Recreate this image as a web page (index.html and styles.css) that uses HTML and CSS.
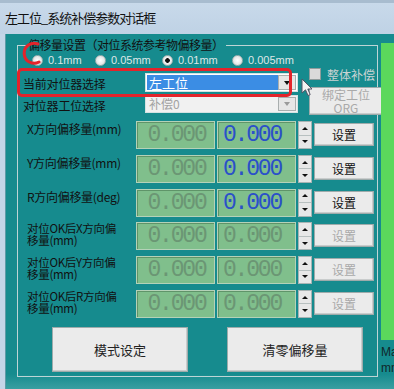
FILE: index.html
```html
<!DOCTYPE html>
<html lang="zh-CN">
<head>
    <meta charset="UTF-8">
    <meta name="viewport" content="width=device-width, initial-scale=1.0">
    <title>左工位_系统补偿参数对话框</title>
    <link rel="stylesheet" href="styles.css">
</head>
<body>
    <div class="window">
        <div class="titlebar">左工位_系统补偿参数对话框</div>

        <div class="client">
            <fieldset class="group">
                <legend>偏移量设置（对位系统参考物偏移量）</legend>

                <div class="radios">
                    <label class="radio"><span class="dot"></span>0.1mm</label>
                    <label class="radio"><span class="dot"></span>0.05mm</label>
                    <label class="radio checked"><span class="dot"></span>0.01mm</label>
                    <label class="radio"><span class="dot"></span>0.005mm</label>
                </div>

                <div class="selectors">
                    <div class="label">当前对位器选择</div>
                    <div class="combo active">
                        <span class="combo-text">左工位</span>
                        <span class="combo-btn"><i class="arrow"></i></span>
                    </div>
                    <div class="side-controls">
                        <label class="check"><span class="box"></span>整体补偿</label>
                        <div class="btn bind disabled">绑定工位<br>ORG</div>
                    </div>
                    <div class="label">对位器工位选择</div>
                    <div class="combo disabled">
                        <span class="combo-text">补偿0</span>
                        <span class="combo-btn"><i class="arrow"></i></span>
                    </div>
                </div>

                <div class="offsets">
                    <div class="label">X方向偏移量(mm)</div>
                    <div class="field first">0.000</div>
                    <div class="field second live">0.000</div>
                    <div class="spin"><span><i class="up"></i></span><span><i class="down"></i></span></div>
                    <div class="btn set">设置</div>

                    <div class="label">Y方向偏移量(mm)</div>
                    <div class="field first">0.000</div>
                    <div class="field second live">0.000</div>
                    <div class="spin"><span><i class="up"></i></span><span><i class="down"></i></span></div>
                    <div class="btn set">设置</div>

                    <div class="label">R方向偏移量(deg)</div>
                    <div class="field first">0.000</div>
                    <div class="field second live">0.000</div>
                    <div class="spin"><span><i class="up"></i></span><span><i class="down"></i></span></div>
                    <div class="btn set">设置</div>

                    <div class="label two">对位OK后X方向偏<br>移量(mm)</div>
                    <div class="field first">0.000</div>
                    <div class="field second">0.000</div>
                    <div class="spin"><span><i class="up"></i></span><span><i class="down"></i></span></div>
                    <div class="btn set disabled">设置</div>

                    <div class="label two">对位OK后Y方向偏<br>移量(mm)</div>
                    <div class="field first">0.000</div>
                    <div class="field second">0.000</div>
                    <div class="spin"><span><i class="up"></i></span><span><i class="down"></i></span></div>
                    <div class="btn set disabled">设置</div>

                    <div class="label two">对位OK后R方向偏<br>移量(mm)</div>
                    <div class="field first">0.000</div>
                    <div class="field second">0.000</div>
                    <div class="spin"><span><i class="up"></i></span><span><i class="down"></i></span></div>
                    <div class="btn set disabled">设置</div>
                </div>

                <div class="actions">
                    <div class="btn big">模式设定</div>
                    <div class="btn big">清零偏移量</div>
                </div>
            </fieldset>

            <div class="side">
                <div class="meter"></div>
                <div class="side-text">Max<br>mm</div>
            </div>
        </div>

        <!-- annotations drawn over the dialog -->
        <svg class="mark-arc" width="26" height="26" viewBox="0 0 26 26">
            <path d="M20 4 A10 10 0 1 0 21 22" fill="none" stroke="#e3242b" stroke-width="3" stroke-linecap="round"/>
        </svg>
        <div class="mark-box"></div>
        <svg class="cursor" width="14" height="20" viewBox="0 0 14 20">
            <path d="M1 1 L1 15 L4.5 11.8 L7 17.5 L9.2 16.6 L6.8 11 L11 11 Z" fill="#f4f4f4" stroke="#556" stroke-width="1"/>
        </svg>
    </div>
</body>
</html>
```

FILE: styles.css
```css
* {
    margin: 0;
    padding: 0;
    box-sizing: border-box;
}

body {
    width: 394px;
    height: 389px;
    overflow: hidden;
    background: #c3d5e7;
    font-family: "Noto Sans CJK SC", sans-serif;
    color: #111;
}

.window {
    position: relative;
    height: 389px;
}

.titlebar {
    height: 34px;
    padding: 9px 0 0 5px;
    font-size: 13px;
    line-height: 18px;
    letter-spacing: -1px;
    background: linear-gradient(#a8bccf 0, #a8bccf 3px, #c8d9ea 3px, #bfd2e5 100%);
}

.client {
    display: flex;
    height: 355px;
    margin-left: 5px;
    padding: 3px 0 0 12px;
    background: linear-gradient(#168b8e 0, #168b8e 340px, #3a9fa1 355px);
    box-shadow: inset 1px 0 0 #5d9aa6;
}

.group {
    width: 361px;
    height: 340px;
    min-width: 0;
    border: 1px solid #bdd5d6;
    flex-shrink: 0;
}

legend {
    margin-left: 8px;
    padding: 0 2px;
    font-size: 12px;
    line-height: 16px;
    letter-spacing: -0.5px;
}

/* radio row */
.radios {
    display: grid;
    grid-template-columns: 63px 67px 70px auto;
    height: 14px;
    padding-left: 14px;
}

.radio {
    display: flex;
    align-items: center;
    gap: 5px;
    font-family: "Liberation Sans", sans-serif;
    font-size: 11px;
    color: #dfe7e7;
}

.dot {
    width: 11px;
    height: 11px;
    border-radius: 50%;
    border: 1px solid #9fb0b0;
    background: radial-gradient(#ffffff, #d4d8d8);
}

.checked .dot {
    background: radial-gradient(#111 0, #111 2px, #f2f2f2 2.6px, #d8dcdc);
}

/* selector rows */
.selectors {
    display: grid;
    grid-template-columns: 116px 153px 74px;
    grid-template-rows: 20px 20px;
    column-gap: 11px;
    row-gap: 2px;
    margin-top: 6px;
}

.selectors .label {
    display: flex;
    align-items: center;
    padding-left: 5px;
    font-size: 12px;
    letter-spacing: -0.2px;
}

.combo {
    display: flex;
    height: 19px;
    padding: 1px;
    border: 1px solid #d4e2e2;
    background: #fff;
}

.combo-text {
    flex: 1;
    padding-left: 2px;
    font-size: 13px;
    line-height: 15px;
}

.combo.active .combo-text {
    background: #3b8de4;
    color: #fff;
}

.combo-btn {
    width: 18px;
    display: flex;
    align-items: center;
    justify-content: center;
    background: #e6e6e6;
    border: 1px solid #a9aeae;
}

.arrow {
    border-left: 3.5px solid transparent;
    border-right: 3.5px solid transparent;
    border-top: 4px solid #111;
}

.combo.disabled {
    height: 18px;
    background: #f1f1f1;
}

.combo.disabled .combo-text {
    color: #a2a2a2;
    font-size: 12px;
    line-height: 14px;
}

.combo.disabled .arrow {
    border-top-color: #9a9a9a;
}

.side-controls {
    grid-column: 3;
    grid-row: 1 / 3;
    margin-top: -5px;
    display: flex;
    flex-direction: column;
}

.check {
    display: flex;
    align-items: center;
    gap: 6px;
    height: 12px;
    font-size: 12px;
    color: #c9d3d3;
}

.box {
    width: 12px;
    height: 12px;
    background: #dadada;
    border: 1px solid #8f9c9c;
}

.btn {
    display: flex;
    align-items: center;
    justify-content: center;
    text-align: center;
    background: #ebebeb;
    border: 1px solid #9eabab;
    box-shadow: inset -1px -1px 0 #c9cccc;
    font-size: 12px;
}

.btn.disabled {
    color: #a9a9a9;
}

.bind {
    margin-top: 7px;
    height: 31px;
    line-height: 13px;
    font-size: 12px;
}

/* offset rows */
.offsets {
    display: grid;
    grid-template-columns: 116px 79px 79px 14px 60px;
    grid-auto-rows: 28px;
    column-gap: 2px;
    row-gap: 5.8px;
    margin-top: 6px;
}

.offsets .label {
    padding: 2px 0 0 9px;
    font-size: 12px;
    line-height: 12px;
    letter-spacing: -0.3px;
}

.offsets .label.two {
    padding-top: 0;
    font-size: 11.5px;
}

.field {
    display: flex;
    align-items: center;
    font-family: "Liberation Mono", monospace;
    font-size: 23px;
    letter-spacing: -2.2px;
    color: #6b9674;
    background: #80bf8c;
    border: 1px solid #b4d2b8;
    box-shadow: inset 1px 1px 0 #5f9469;
}

.field.first {
    justify-content: center;
    padding-left: 2px;
}

.field.second {
    padding-left: 5px;
}

.field.live {
    color: #2a50c9;
}

.spin {
    display: flex;
    flex-direction: column;
    background: #e8e8e8;
    border: 1px solid #a8b4b4;
}

.spin span {
    flex: 1;
    display: flex;
    align-items: center;
    justify-content: center;
}

.spin span + span {
    border-top: 1px solid #b8c0c0;
}

.up {
    border-left: 3px solid transparent;
    border-right: 3px solid transparent;
    border-bottom: 3px solid #111;
}

.down {
    border-left: 3px solid transparent;
    border-right: 3px solid transparent;
    border-top: 3px solid #111;
}

.set {
    margin-top: 2px;
    height: 23px;
    font-size: 12px;
}

/* bottom buttons */
.actions {
    display: flex;
    gap: 39px;
    margin-top: 9px;
    padding-left: 34px;
}

.btn.big {
    width: 136px;
    height: 45px;
    font-size: 13px;
    color: #222;
}

/* right strip */
.side {
    margin-left: 3px;
    width: 13px;
    white-space: nowrap;
}

.meter {
    margin-top: 6px;
    height: 297px;
    background: #5bd85c;
}

.side-text {
    margin-top: 4px;
    font-family: "Liberation Sans", sans-serif;
    font-size: 12px;
    line-height: 16px;
    color: #10282a;
}

/* annotations */
.mark-arc {
    position: absolute;
    left: 18px;
    top: 40px;
}

.mark-box {
    position: absolute;
    left: 17px;
    top: 68px;
    width: 275px;
    height: 29px;
    border: 3px solid #e3242b;
    border-radius: 5px;
}

.cursor {
    position: absolute;
    left: 301px;
    top: 78px;
}
```
